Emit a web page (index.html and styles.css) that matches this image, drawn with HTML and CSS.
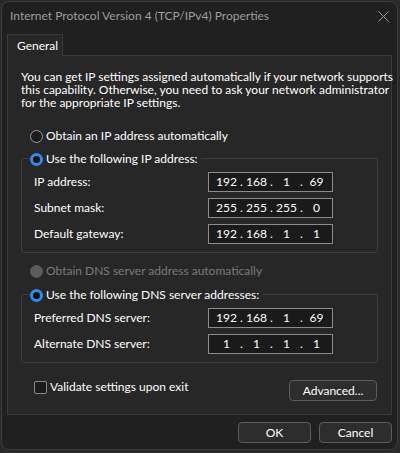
FILE: index.html
```html
<!DOCTYPE html>
<html lang="en">
<head>
    <meta charset="UTF-8">
    <link rel="stylesheet" href="styles.css">
    <title>Internet Protocol Version 4 (TCP/IPv4) Properties</title>
</head>
<body>
<div class="window">
    <div class="titlebar">
        <span class="title">Internet Protocol Version 4 (TCP/IPv4) Properties</span>
        <svg class="close" width="11" height="11" viewBox="0 0 11 11">
            <path d="M0.5 0.5 L10.5 10.5 M10.5 0.5 L0.5 10.5" stroke="#9a9a9a" stroke-width="1" fill="none"/>
        </svg>
    </div>
    <div class="tabs">
        <div class="tab">General</div>
    </div>
    <div class="panel">
        <p class="desc">You can get IP settings assigned automatically if your network supports<br>this capability. Otherwise, you need to ask your network administrator<br>for the appropriate IP settings.</p>

        <div class="option first-option">
            <span class="radio"></span>
            <span>Obtain an IP address automatically</span>
        </div>

        <div class="group ip-group">
            <div class="legend">
                <span class="radio checked"></span>
                <span>Use the following IP address:</span>
            </div>
            <div class="field">
                <label>IP address:</label>
                <div class="ip-box">
                    <span class="octet">192</span><span class="dot">.</span><span class="octet">168</span><span class="dot">.</span><span class="octet">1</span><span class="dot">.</span><span class="octet">69</span>
                </div>
            </div>
            <div class="field">
                <label>Subnet mask:</label>
                <div class="ip-box">
                    <span class="octet">255</span><span class="dot">.</span><span class="octet">255</span><span class="dot">.</span><span class="octet">255</span><span class="dot">.</span><span class="octet">0</span>
                </div>
            </div>
            <div class="field">
                <label>Default gateway:</label>
                <div class="ip-box">
                    <span class="octet">192</span><span class="dot">.</span><span class="octet">168</span><span class="dot">.</span><span class="octet">1</span><span class="dot">.</span><span class="octet">1</span>
                </div>
            </div>
        </div>

        <div class="option disabled dns-option">
            <span class="radio"></span>
            <span>Obtain DNS server address automatically</span>
        </div>

        <div class="group dns-group">
            <div class="legend">
                <span class="radio checked"></span>
                <span>Use the following DNS server addresses:</span>
            </div>
            <div class="field">
                <label>Preferred DNS server:</label>
                <div class="ip-box">
                    <span class="octet">192</span><span class="dot">.</span><span class="octet">168</span><span class="dot">.</span><span class="octet">1</span><span class="dot">.</span><span class="octet">69</span>
                </div>
            </div>
            <div class="field">
                <label>Alternate DNS server:</label>
                <div class="ip-box">
                    <span class="octet">1</span><span class="dot">.</span><span class="octet">1</span><span class="dot">.</span><span class="octet">1</span><span class="dot">.</span><span class="octet">1</span>
                </div>
            </div>
        </div>

        <div class="panel-bottom">
            <div class="check-row">
                <span class="checkbox"></span>
                <span>Validate settings upon exit</span>
            </div>
            <button class="btn advanced">Advanced...</button>
        </div>
    </div>
    <div class="footer">
        <button class="btn">OK</button>
        <button class="btn">Cancel</button>
    </div>
</div>
</body>
</html>
```

FILE: styles.css
```css
body {
    margin: 0;
    padding: 0;
    background-color: #2a2a2a;
    font-family: "Lato", "Noto Sans", sans-serif;
    font-size: 12px;
    line-height: 16px;
    color: #ffffff;
}
.window {
    margin: 1px 2px 0 1px;
    height: 449px;
    box-sizing: border-box;
    background-color: #202020;
    border: 1px solid #3c3c3c;
    border-radius: 8px;
    overflow: hidden;
}
.titlebar {
    height: 28px;
    display: flex;
    align-items: center;
    justify-content: space-between;
    padding: 0 8px 0 8px;
    color: #9d9d9d;
}
.tabs {
    padding: 4px 0 0 5px;
    display: flex;
}
.tab {
    width: 56px;
    height: 22px;
    box-sizing: border-box;
    border: 1px solid #3a3a3a;
    border-bottom: none;
    background-color: #272727;
    padding-left: 9px;
    line-height: 22px;
    margin-bottom: -1px;
    position: relative;
}
.panel {
    margin: 0 5px 0 5px;
    height: 360px;
    box-sizing: border-box;
    border: 1px solid #3a3a3a;
    background-color: #272727;
    padding: 14px 13px 0 13px;
}
.desc {
    margin: 0;
    line-height: 13px;
    white-space: nowrap;
}
.option {
    display: flex;
    align-items: center;
    height: 16px;
    padding-left: 9px;
}
.first-option {
    margin-top: 19px;
}
.radio {
    width: 11px;
    height: 11px;
    border-radius: 50%;
    border: 1px solid #9a9a9a;
    background-color: #1c1c1c;
    margin-right: 3px;
    flex-shrink: 0;
}
.radio.checked {
    width: 7px;
    height: 7px;
    border: 3px solid #2b8ef0;
    background-color: #111111;
}
.disabled {
    color: #7a7a7a;
}
.disabled .radio {
    border-color: #5c5c5c;
    background-color: #5c5c5c;
}
.group {
    border: 1px solid #3d3d3d;
    border-radius: 3px;
    padding: 0 0 8px 12px;
}
.ip-group {
    margin-top: 14px;
}
.legend {
    display: flex;
    width: fit-content;
    align-items: center;
    height: 18px;
    margin-top: -9px;
    margin-left: -4px;
    padding-right: 3px;
    background-color: #272727;
}
.field {
    display: flex;
    align-items: center;
    height: 20px;
    margin-top: 6px;
}
.legend + .field {
    margin-top: 4px;
}
.field label {
    width: 174px;
}
.ip-box {
    width: 125px;
    height: 20px;
    box-sizing: border-box;
    border: 1px solid #8c8c8c;
    background-color: #1a1a1a;
    display: flex;
    align-items: center;
    padding-left: 5px;
}
.octet {
    width: 25px;
    text-align: center;
}
.dot {
    width: 5px;
    text-align: center;
}
.dns-option {
    margin-top: 10px;
}
.dns-group {
    margin-top: 15px;
    padding-bottom: 8px;
}
.panel-bottom {
    display: flex;
    justify-content: space-between;
    align-items: flex-start;
    margin-top: 16px;
    padding-right: 1px;
}
.check-row {
    display: flex;
    align-items: center;
    padding-left: 13px;
}
.checkbox {
    width: 11px;
    height: 11px;
    border: 1px solid #8a8a8a;
    border-radius: 2px;
    background-color: #1c1c1c;
    margin-right: 3px;
}
.btn {
    height: 21px;
    box-sizing: border-box;
    border: 1px solid #5c5c5c;
    border-radius: 4px;
    background-color: #2d2d2d;
    color: #ffffff;
    font-family: "Lato", "Noto Sans", sans-serif;
    font-size: 12px;
    padding: 0;
}
.advanced {
    width: 88px;
    margin-top: 1px;
}
.footer {
    display: flex;
    justify-content: flex-end;
    gap: 8px;
    padding: 7px 5px 0 0;
}
.footer .btn {
    width: 73px;
}
```
